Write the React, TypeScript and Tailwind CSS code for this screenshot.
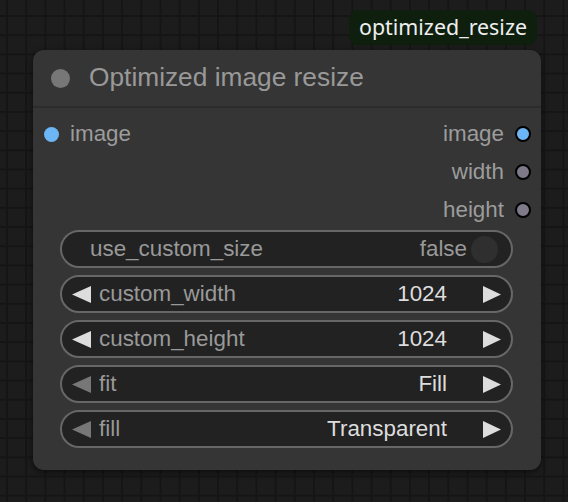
import React from 'react';

const font = { fontFamily: '"Liberation Sans", Arial, sans-serif' };

const ArrowLeft = ({ dim }: { dim?: boolean }) => (
  <svg width="19" height="17" viewBox="0 0 19 17" className="shrink-0">
    <polygon points="19,0 19,17 0,8.5" fill={dim ? '#777777' : '#dddddd'} />
  </svg>
);

const ArrowRight = () => (
  <svg width="18" height="17" viewBox="0 0 18 17" className="shrink-0">
    <polygon points="0,0 0,17 18,8.5" fill="#dddddd" />
  </svg>
);

type Combo = { label: string; value: string; dimLeft?: boolean };

const widgets: Combo[] = [
  { label: 'custom_width', value: '1024' },
  { label: 'custom_height', value: '1024' },
  { label: 'fit', value: 'Fill', dimLeft: true },
  { label: 'fill', value: 'Transparent', dimLeft: true },
];

const OutSlot = ({ name, color }: { name: string; color: string }) => (
  <div className="flex h-[38px] items-center justify-end gap-[11px]">
    <span className="text-[22.4px] text-[#9c9c9c]">{name}</span>
    <span className={`h-[16px] w-[16px] rounded-full border-2 border-black ${color}`} />
  </div>
);

export default function App() {
  return (
    <div
      className="h-[502px] w-[568px] overflow-hidden bg-[#1c1c1c] bg-[linear-gradient(to_right,#151515_2px,transparent_2px),linear-gradient(to_bottom,#151515_2px,transparent_2px)] bg-[size:19.2px_19.2px] bg-[position:6px_15px] pl-[33px] pt-[10px]"
      style={font}
    >
      <div className="flex w-[508px] flex-col">
        <div
          className="mr-[4px] flex h-[35px] items-center self-end rounded-[9px] bg-[#0e1f0e] px-[10px] text-[21.4px] text-[#eeeeee]"
          style={{ fontFamily: '"Noto Sans", "Liberation Sans", sans-serif' }}
        >
          optimized_resize
        </div>

        <div className="mt-[5px] h-[420px] rounded-[11px] bg-[#353535] shadow-[0_2px_6px_rgba(0,0,0,0.55)]">
          <div className="flex h-[58px] items-center gap-[19px] border-b-2 border-[#2c2c2c] pl-[18px]">
            <span className="h-[19px] w-[19px] rounded-full bg-[#777777]" />
            <span className="text-[26.3px] text-[#999999]">Optimized image resize</span>
          </div>

          <div className="flex justify-between pt-[7px] pr-[10px] pl-[11px]">
            <div className="flex h-[38px] items-center gap-[11px]">
              <span className="h-[15px] w-[15px] rounded-full bg-[#6cb6f5]" />
              <span className="text-[22.4px] text-[#9c9c9c]">image</span>
            </div>
            <div className="flex flex-col">
              <OutSlot name="image" color="bg-[#6cb6f5]" />
              <OutSlot name="width" color="bg-[#7e7a8a]" />
              <OutSlot name="height" color="bg-[#7e7a8a]" />
            </div>
          </div>

          <div className="mt-[1px] flex flex-col gap-[7px] pr-[28px] pl-[27px]">
            <div className="flex h-[38px] items-center rounded-full border-2 border-[#676767] bg-[#222222] pr-[13px] pl-[28px] text-[22.4px]">
              <span className="flex-1 text-[#999999]">use_custom_size</span>
              <span className="text-[#999999]">false</span>
              <span className="ml-[4px] h-[27px] w-[27px] rounded-full bg-[#2f2f2f]" />
            </div>
            {widgets.map((w) => (
              <div
                key={w.label}
                className="flex h-[38px] items-center rounded-full border-2 border-[#676767] bg-[#222222] pr-[10px] pl-[10px] text-[22.4px]"
              >
                <ArrowLeft dim={w.dimLeft} />
                <span className="ml-[8px] flex-1 text-[#999999]">{w.label}</span>
                <span className="mr-[36px] text-[#dddddd]">{w.value}</span>
                <ArrowRight />
              </div>
            ))}
          </div>
        </div>
      </div>
    </div>
  );
}
